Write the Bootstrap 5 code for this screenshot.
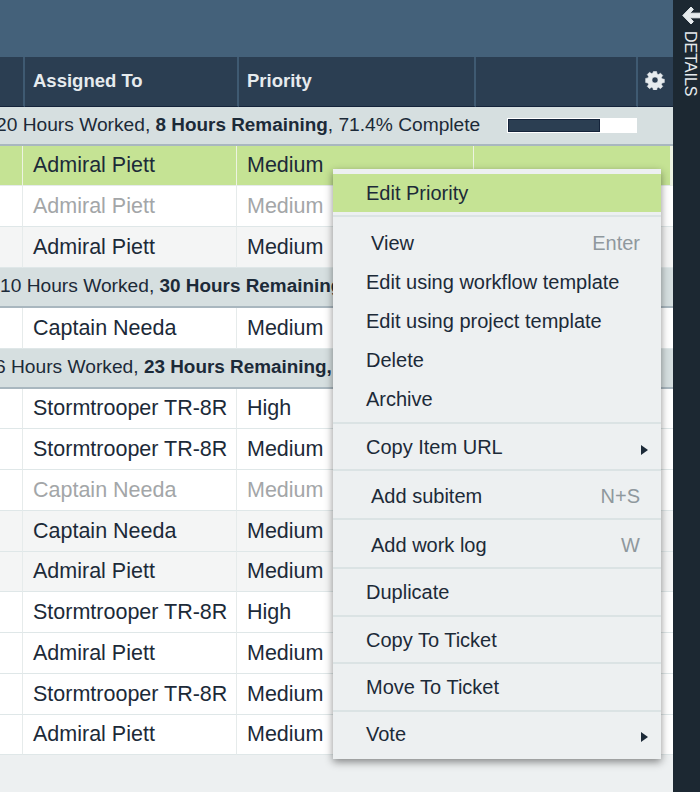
<!DOCTYPE html>
<html lang="en">
<head>
<meta charset="utf-8">
<title>Items</title>
<link href="https://cdn.jsdelivr.net/npm/bootstrap@5.3.0/dist/css/bootstrap.min.css" rel="stylesheet">
<style>
html,body{height:100%;}
body{background:#edf0f1;font-family:"Liberation Sans",Arial,sans-serif;color:#1c2a38;overflow:hidden;}
.app-shell{height:792px;width:700px;position:relative;}
.main-pane{width:673px;flex:none;}
.top-band{height:57px;background:#44617a;}
.grid-table{table-layout:fixed;width:673px;margin:0;border-collapse:separate;border-spacing:0;font-size:21.5px;--bs-table-bg:transparent;}
.grid-table th{height:50px;background:#2b3e52;color:#e6ebee;font-size:18.5px;font-weight:700;padding:0 0 1px 8px;vertical-align:middle;border:0;border-right:2px solid #3f5a72;border-bottom:1px solid #14233a;}
.grid-table th:last-child{border-right:0;padding:0 1px 6px 0;text-align:center;}
.grid-table td{height:40.75px;padding:0 0 0 10px;vertical-align:middle;white-space:nowrap;border:0;border-right:1.5px solid #e6ebeb;border-bottom:1.5px solid #dfe7e8;background:#fff;color:#1c2a38;}
.grid-table td:last-child{border-right:0;}
.grid-table .row-alt td{background:#f4f5f5;}
.grid-table .row-sel td{background:#c5e394;border-right-color:#edf3e2;border-bottom-color:#e6ebeb;}
.grid-table .row-sel td:last-child{border-right:3px solid #edf3e2;}
.grid-table .row-dim td{color:#a3a6a8;}
.grid-table .row-sum td{height:40px;background:#d6dfe0;border-right:0;border-bottom:2px solid #a9b7bf;font-size:19.2px;padding:0;overflow:hidden;}
.grid-table .row-sum.row-first td{height:38.5px;}
.grid-table .row-sum b{font-size:18.9px;}
.sum-wrap{display:flex;align-items:center;white-space:nowrap;}
.shift-a{margin-left:-4px;}
.shift-b{margin-left:0;}
.shift-c{margin-left:-5px;}
.sum-bar{width:130px;height:15px;margin-left:27px;background:#fff;border-radius:0;padding:1px;flex:none;}
.sum-bar .progress-bar{background:#2b3e52;border:1px solid #14233a;}
.side-rail{width:27px;flex:none;background:#1c2832;color:#e6ebee;display:flex;flex-direction:column;align-items:flex-start;overflow:hidden;}
.rail-arrow{margin:6px 0 0 9px;flex:none;display:block;}
.rail-label{writing-mode:vertical-rl;font-size:16px;margin:6px 0 0 7px;line-height:20px;}
.ctx-menu{position:absolute;display:block;left:333px;top:169px;width:328px;height:590px;margin:0;padding:5px 0 0;border:0;border-radius:0;background:#edf0f1;box-shadow:0 3px 8px rgba(0,0,0,.45);font-size:20px;color:#1c2a38;}
.ctx-item{display:flex;align-items:center;justify-content:space-between;height:39px;padding:0 21px 0 33px;color:#1c2a38;background:transparent;white-space:nowrap;}
.ctx-item:hover{color:#1c2a38;background:transparent;}
.ctx-item.ctx-on,.ctx-item.ctx-on:hover{background:#c5e394;height:38px;}
.ctx-item.h-45{height:45px;}
.ctx-item.h-46{height:46px;}
.ctx-item.h-47{height:47px;padding-top:3px;}
.ctx-item.ctx-key{padding-left:38px;}
.ctx-item.ctx-sub{padding-right:13px;}
.ctx-item.ctx-last{padding-top:0;padding-bottom:2px;}
.ctx-hint{color:#8f989d;}
.ctx-caret{width:0;height:0;border-left:7px solid #1c2a38;border-top:5.5px solid transparent;border-bottom:5.5px solid transparent;margin-top:6px;}
.ctx-sep{height:2px;margin:0;background:#dbe3e4;opacity:1;border:0;flex:none;}
.sep-first{margin:3px 0 6px;}
.sep-group{margin-top:4px;}
</style>
</head>
<body>
<div class="app-shell d-flex">
  <div class="main-pane">
    <div class="top-band"></div>
    <table class="table grid-table">
      <colgroup><col style="width:25px"><col style="width:214px"><col style="width:237px"><col style="width:162px"><col style="width:35px"></colgroup>
      <thead>
        <tr><th></th><th>Assigned To</th><th>Priority</th><th></th>
        <th><svg width="20" height="20" viewBox="0 0 20 20" fill="#e6ebee" stroke="#e6ebee" stroke-width=".6" stroke-linejoin="round" aria-hidden="true"><path fill-rule="evenodd" d="M8.2 0.6h3.6l.5 2.6 1.6.7 2.2-1.5 2.5 2.5-1.5 2.2.7 1.6 2.6.5v3.6l-2.6.5-.7 1.6 1.5 2.2-2.5 2.5-2.2-1.5-1.6.7-.5 2.6H8.2l-.5-2.6-1.6-.7-2.2 1.5-2.5-2.5 1.5-2.2-.7-1.6-2.6-.5V8.2l2.6-.5.7-1.6-1.5-2.2 2.5-2.5 2.2 1.5 1.6-.7zM10 6.6a3.4 3.4 0 1 0 0 6.8 3.4 3.4 0 0 0 0-6.8z" transform="translate(1 1) scale(.9)"/></svg></th></tr>
      </thead>
    </table>
    <table class="table grid-table">
      <colgroup><col style="width:23px"><col style="width:214px"><col style="width:237px"><col style="width:199px"></colgroup>
      <tbody>
        <tr class="row-sum row-first"><td colspan="4"><div class="sum-wrap"><span class="shift-a">20 Hours Worked, <b>8 Hours Remaining</b>, 71.4% Complete</span><div class="progress sum-bar"><div class="progress-bar" style="width:71.4%"></div></div></div></td></tr>
        <tr class="row-sel"><td></td><td>Admiral Piett</td><td>Medium</td><td></td></tr>
        <tr class="row-dim"><td></td><td>Admiral Piett</td><td>Medium</td><td></td></tr>
        <tr class="row-alt"><td></td><td>Admiral Piett</td><td>Medium</td><td></td></tr>
        <tr class="row-sum"><td colspan="4"><div class="sum-wrap"><span class="shift-b">10 Hours Worked, <b>30 Hours Remaining</b></span></div></td></tr>
        <tr><td></td><td>Captain Needa</td><td>Medium</td><td></td></tr>
        <tr class="row-sum"><td colspan="4"><div class="sum-wrap"><span class="shift-c">6 Hours Worked, <b>23 Hours Remaining,</b></span></div></td></tr>
        <tr><td></td><td>Stormtrooper TR-8R</td><td>High</td><td></td></tr>
        <tr><td></td><td>Stormtrooper TR-8R</td><td>Medium</td><td></td></tr>
        <tr class="row-dim"><td></td><td>Captain Needa</td><td>Medium</td><td></td></tr>
        <tr class="row-alt"><td></td><td>Captain Needa</td><td>Medium</td><td></td></tr>
        <tr class="row-alt"><td></td><td>Admiral Piett</td><td>Medium</td><td></td></tr>
        <tr><td></td><td>Stormtrooper TR-8R</td><td>High</td><td></td></tr>
        <tr><td></td><td>Admiral Piett</td><td>Medium</td><td></td></tr>
        <tr><td></td><td>Stormtrooper TR-8R</td><td>Medium</td><td></td></tr>
        <tr><td></td><td>Admiral Piett</td><td>Medium</td><td></td></tr>
      </tbody>
    </table>
  </div>
  <aside class="side-rail">
    <svg class="rail-arrow" width="18" height="19" viewBox="0 0 18 19" fill="#e6ebee" stroke="#e6ebee" stroke-linejoin="round" aria-hidden="true"><path d="M9 1l2.4 2.4-3.6 3.8H18v4.6H7.8l3.6 3.8L9 18 .8 9.5z"/></svg>
    <span class="rail-label">DETAILS</span>
  </aside>
  <div class="dropdown-menu ctx-menu">
    <div class="dropdown-item ctx-item ctx-on">Edit Priority</div>
    <hr class="ctx-sep sep-first">
    <div class="dropdown-item ctx-item ctx-key"><span>View</span><span class="ctx-hint">Enter</span></div>
    <div class="dropdown-item ctx-item">Edit using workflow template</div>
    <div class="dropdown-item ctx-item">Edit using project template</div>
    <div class="dropdown-item ctx-item">Delete</div>
    <div class="dropdown-item ctx-item">Archive</div>
    <hr class="ctx-sep sep-group">
    <div class="dropdown-item ctx-item h-45 ctx-sub"><span>Copy Item URL</span><span class="ctx-caret"></span></div>
    <hr class="ctx-sep">
    <div class="dropdown-item ctx-item h-47 ctx-key"><span>Add subitem</span><span class="ctx-hint">N+S</span></div>
    <hr class="ctx-sep">
    <div class="dropdown-item ctx-item h-47 ctx-key"><span>Add work log</span><span class="ctx-hint">W</span></div>
    <hr class="ctx-sep">
    <div class="dropdown-item ctx-item h-46">Duplicate</div>
    <hr class="ctx-sep">
    <div class="dropdown-item ctx-item h-45">Copy To Ticket</div>
    <hr class="ctx-sep">
    <div class="dropdown-item ctx-item h-46">Move To Ticket</div>
    <hr class="ctx-sep">
    <div class="dropdown-item ctx-item h-46 ctx-sub ctx-last"><span>Vote</span><span class="ctx-caret"></span></div>
  </div>
</div>
<script src="https://cdn.jsdelivr.net/npm/bootstrap@5.3.0/dist/js/bootstrap.bundle.min.js"></script>
</body>
</html>
